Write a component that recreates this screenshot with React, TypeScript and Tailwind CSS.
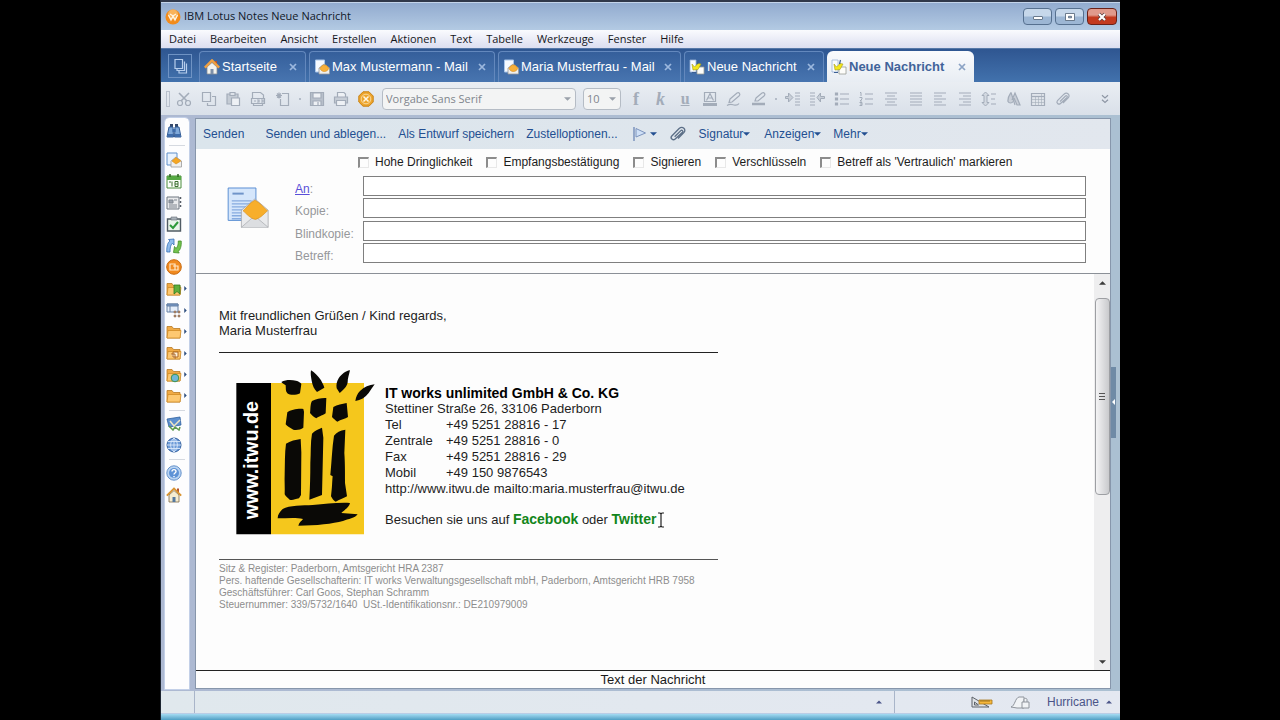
import { useState } from 'react';
import type { FC, ReactNode } from 'react';

type IconProps = { children: ReactNode; className?: string };

// 16x16 outline icon used by the toolbar
const Glyph: FC<IconProps> = ({ children, className = 'w-4 h-4' }) => (
  <svg viewBox="0 0 16 16" className={className} fill="none" stroke="currentColor" strokeWidth="1.2">
    {children}
  </svg>
);

const Caret: FC<{ className?: string; up?: boolean }> = ({ className = 'w-[7px] h-1', up }) => (
  <svg viewBox="0 0 8 4" className={className} fill="currentColor">
    <path d={up ? 'M0 4h8L4 0z' : 'M0 0h8L4 4z'} />
  </svg>
);

const HouseIcon = () => (
  <svg viewBox="0 0 16 16" className="w-4 h-4 shrink-0">
    <path d="M11 2h2v4h-2z" fill="#b5522d" />
    <path d="M3 8v7h10V8L8 3.500z" fill="#f3f3ee" stroke="#8b8f94" strokeWidth=".8" />
    <path d="M6.500 10h3v5h-3z" fill="#7d8fa8" />
    <path d="M.8 8.600 8 1.400l7.200 7.200" fill="none" stroke="#f0a040" strokeWidth="2.400" />
  </svg>
);

const MailIcon = () => (
  <svg viewBox="0 0 16 16" className="w-4 h-4 shrink-0">
    <path d="M1.500 1h9v12h-9z" fill="#f6faff" stroke="#a9c6ea" />
    <path d="m5 9 5-4 5.500 4v6H5z" fill="#efefee" stroke="#9a9a9a" strokeWidth=".8" />
    <path d="M6 9.500C7 7 9 6 10.300 6c1.500 0 3.500 1 4.500 3.500-1 2-2.500 3-4.500 3s-3.300-1-4.300-3z" fill="#f7b03a" stroke="#d68910" strokeWidth=".6" />
  </svg>
);

const ComposeIcon = () => (
  <svg viewBox="0 0 16 16" className="w-4 h-4 shrink-0">
    <path d="M1 1h6v12H1z" fill="#f8fbff" stroke="#9ab3d6" strokeWidth=".8" />
    <path d="M8 8h7v7H8z" fill="#fdfdfa" stroke="#9a9d94" strokeWidth=".8" />
    <path d="m3 5 2.500 3L9 4.500l3 .5-3 5.500-5 .5z" fill="#f4e71c" stroke="#a89e14" strokeWidth=".6" />
    <path d="M9.500 1 8.500 5M3 13.500h4" stroke="#3c5f93" strokeWidth="1.200" />
  </svg>
);

const Clip: FC<{ className?: string }> = ({ className }) => (
  <Glyph className={className}>
    <path d="M5 10.500 10.500 5c1-1 2.500.5 1.500 1.500l-6.500 6c-2 1.800-4.800-.8-3-2.800L9 3.200c3-2.700 6.800.8 4.200 3.600L8 12" />
  </Glyph>
);

const menus = ['Datei', 'Bearbeiten', 'Ansicht', 'Erstellen', 'Aktionen', 'Text', 'Tabelle', 'Werkzeuge', 'Fenster', 'Hilfe'];

const tabs = [
  { label: 'Startseite', icon: <HouseIcon />, width: 'w-[107px]' },
  { label: 'Max Mustermann - Mail', icon: <MailIcon />, width: 'w-[186px]' },
  { label: 'Maria Musterfrau - Mail', icon: <MailIcon />, width: 'w-[183px]' },
  { label: 'Neue Nachricht', icon: <ComposeIcon />, width: 'w-[140px]' },
];

const TitleBar = () => (
  <header className="flex items-center h-7 pl-1 pr-[3px] bg-linear-to-b from-[#92abcf] to-[#b3cae3] border-t border-[#c4d4ea]">
    <svg viewBox="0 0 16 16" className="w-4 h-4">
      <circle cx="8" cy="8" r="7.500" fill="#f28c1c" />
      <circle cx="8" cy="5.500" r="5" fill="#f9b35a" />
      <path d="m3.500 6 2.500 5 2-4 2 4 2.500-5M5 5l3 2 3-2" fill="none" stroke="#fff3df" strokeWidth="1.300" />
    </svg>
    <h1 className="ml-[3px] font-['Open_Sans',sans-serif] text-[11px] text-[#101828]">IBM Lotus Notes Neue Nachricht</h1>
    <div className="ml-auto flex gap-[3px] text-white">
      <button aria-label="Minimieren" className="w-[29px] h-[17px] flex items-center justify-center rounded-sm border border-[#56708f] bg-linear-to-b from-[#c6d7ea] from-45% to-[#9cb6d4] to-55%">
        <svg viewBox="0 0 12 10" className="w-3 h-2.5"><rect x="1.500" y="4.500" width="9" height="3" rx=".5" fill="#fff" stroke="#4f5f74" strokeWidth=".8" /></svg>
      </button>
      <button aria-label="Maximieren" className="w-[29px] h-[17px] flex items-center justify-center rounded-sm border border-[#56708f] bg-linear-to-b from-[#c6d7ea] from-45% to-[#9cb6d4] to-55%">
        <svg viewBox="0 0 12 10" className="w-3 h-2.5"><path d="M1.500 1.500h9v7h-9zM4.500 4.300v1.500h3V4.300z" fill="#fff" fillRule="evenodd" stroke="#4f5f74" strokeWidth=".8" /></svg>
      </button>
      <button aria-label="Schließen" className="w-[30px] h-[17px] flex items-center justify-center rounded-sm border border-[#6b2118] bg-linear-to-b from-[#e09a8c] from-40% to-[#c33a1f] to-55%">
        <svg viewBox="0 0 12 10" className="w-3 h-2.5"><path d="m3 2 6 6M9 2 3 8" stroke="#5a3a3a" strokeWidth="3.600" /><path d="m3 2 6 6M9 2 3 8" stroke="#fff" strokeWidth="2.200" /></svg>
      </button>
    </div>
  </header>
);

const TabBar = () => (
  <div className="flex items-end h-[34px] pl-1 bg-linear-to-b from-[#2f5691] to-[#4272ad] border-t border-[#5778a8] font-['Liberation_Sans',Arial,sans-serif] text-[13px] text-white">
    <button aria-label="Öffnen" className="self-center w-6 h-6 mx-[3px] mr-[7px] flex items-center justify-center border border-[#6f93c4] text-[#b6cdec]">
      <Glyph>
        <path d="M3 1.500h7.500v9H3zM5 10.500v2h7.500v-9M7 12.500V15h7.500V5.500" />
      </Glyph>
    </button>
    {tabs.map((tab, i) => (
      <div key={i} className={`${tab.width} mr-[3px] h-[31px] flex items-center pl-1 pr-2 rounded-t border border-b-0 border-[#6388bd] bg-linear-to-b from-[#355f9b] to-[#4875b0]`}>
        {tab.icon}
        <a href="#" className="ml-0.5 whitespace-nowrap">{tab.label}</a>
        <button aria-label="Tab schließen" className="ml-auto text-[#9cb8de]">
          <Glyph className="w-2 h-2"><path d="m2 2 12 12M14 2 2 14" strokeWidth="3.500" /></Glyph>
        </button>
      </div>
    ))}
    <div className="w-[147px] h-[31px] flex items-center pl-1 pr-2 rounded-t-md bg-linear-to-b from-[#fafbfd] to-[#e8edf3]">
      <ComposeIcon />
      <a href="#" className="ml-0.5 font-bold text-[#41639a] whitespace-nowrap">Neue Nachricht</a>
      <button aria-label="Tab schließen" className="ml-auto text-[#8ba2c4]">
        <Glyph className="w-2 h-2"><path d="m2 2 12 12M14 2 2 14" strokeWidth="3.500" /></Glyph>
      </button>
    </div>
  </div>
);

const Tool: FC<{ label: string; children: ReactNode }> = ({ label, children }) => (
  <button aria-label={label} className="w-5 h-5 flex items-center justify-center text-[#a3acb9]">
    {children}
  </button>
);

const Dot = () => <span className="w-[5px] flex justify-center"><span className="w-0.5 h-0.5 bg-[#b4bcc8]" /></span>;

const lines = (rows: number[][]) => rows.map(([y, x1, x2]) => `M${x1} ${y}H${x2}`).join('');

const Toolbar = () => (
  <div className="flex items-center h-[33px] bg-linear-to-b from-[#eaeef3] to-[#d9e0e9]">
    <span className="ml-[5px] w-1 h-4 border border-[#b9c1cd]" />
    <div className="ml-1 w-[202px] flex items-center justify-between">
      <Tool label="Ausschneiden">
        <Glyph><circle cx="4" cy="12" r="2.500" /><circle cx="12" cy="12" r="2.500" /><path d="m5 10 8-8M11 10 3 2" strokeWidth="1.600" /></Glyph>
      </Tool>
      <Tool label="Kopieren"><Glyph><path d="M1.500 1.500h8v9h-8zM11 5.500h3.500v9h-8V12" /></Glyph></Tool>
      <Tool label="Einfügen"><Glyph><path d="M2 3h11v10H2z" fill="#c5ccd5" /><path d="M5 1.500h5v3H5z" fill="#dde2e9" /><path d="M6.500 7h8v7.500h-8z" fill="#eef1f5" /></Glyph></Tool>
      <Tool label="Spezial einfügen"><Glyph><path d="M2.500 7V1.500h8L13.500 4v3M1.500 7.500h13v5h-13zM3.500 13v1.500h9V13M4 10h2m1-1h2v2H7m4-2h2v2h-2" /></Glyph></Tool>
      <Tool label="Neues Dokument"><Glyph><path d="M7 2.500h6.500v12h-8V8M1 4.500h6M4 1.500v6M2 2.500l4 4M6 2.500l-4 4" /></Glyph></Tool>
      <Dot />
      <Tool label="Speichern"><Glyph><path d="M1.500 1.500h13v13h-13z" fill="#b9c1cc" /><path d="M4 2h8v5H4zM4 10h8v4.500H4z" fill="#eef1f5" /><path d="M9 11v3" /></Glyph></Tool>
      <Tool label="Drucken"><Glyph><path d="M4.500 6V1.500H11L12.500 3v3" fill="#eef1f5" /><path d="M1.500 6h13v6h-13z" fill="#c6cdd6" /><path d="M3.500 9.500h9v5h-9z" fill="#eef1f5" /></Glyph></Tool>
      <Tool label="Abbrechen">
        <svg viewBox="0 0 16 16" className="w-4 h-4">
          <path d="M5 .8h6L15.200 5v6L11 15.200H5L.8 11V5z" fill="#eda52d" stroke="#c98215" />
          <circle cx="8" cy="8" r="4.800" fill="none" stroke="#fbe3b4" strokeWidth=".8" />
          <path d="m5.500 5.500 5 5m0-5-5 5" stroke="#fff6e2" strokeWidth="1.500" />
        </svg>
      </Tool>
    </div>
    <div className="relative ml-[6px] w-[194px] text-[#9aa1aa]">
      <select aria-label="Schriftart" className="block w-full h-[22px] pt-px pl-[3px] appearance-none rounded-sm border border-[#b5bcc5] bg-[#f3f4f4] font-['Open_Sans',sans-serif] text-[11px] text-[#7f858d]">
        <option>Vorgabe Sans Serif</option>
      </select>
      <Caret className="absolute right-[5px] top-[9px] w-[7px] h-1 pointer-events-none" />
    </div>
    <div className="relative ml-[7px] w-[38px] text-[#9aa1aa]">
      <select aria-label="Schriftgröße" className="block w-full h-[22px] pt-px pl-[3px] appearance-none rounded-sm border border-[#b5bcc5] bg-[#f3f4f4] font-['Open_Sans',sans-serif] text-[11px] text-[#7f858d]">
        <option>10</option>
      </select>
      <Caret className="absolute right-[5px] top-[9px] w-[7px] h-1 pointer-events-none" />
    </div>
    <div className="ml-[5px] flex-1 flex items-center justify-between">
      <Tool label="Fett"><span className="font-['Liberation_Serif',serif] font-bold text-lg leading-none">f</span></Tool>
      <Tool label="Kursiv"><span className="font-['Liberation_Serif',serif] font-bold italic text-lg leading-none">k</span></Tool>
      <Tool label="Unterstrichen"><span className="font-['Liberation_Serif',serif] text-base leading-none font-bold underline">u</span></Tool>
      <Tool label="Schriftfarbe"><Glyph><path d="M2.500 1.500h11v9h-11z" /><path d="m4.500 9.500 3.500-7 3.500 7M6 7h4" /><path d="M1 13.500h14" strokeWidth="3" /></Glyph></Tool>
      <Tool label="Hervorheben"><Glyph><path d="m4 8 7-6c2-1 4 1 2 3l-7 6-3 .5zM1 14.500c3-2 5-1 7-.5s4 0 5-1.500" /></Glyph></Tool>
      <Tool label="Textmarker"><Glyph><path d="m5 7 6-5c2-1 4 1 2 3L7 10H4z" /><path d="M1 13h13" strokeWidth="2.500" /></Glyph></Tool>
      <Dot />
      <Tool label="Einrücken"><Glyph><path d={lines([[2, 10, 15], [5, 10, 15], [8, 10, 15], [11, 10, 15], [14, 10, 15]])} /><path d="M.5 5.500h3V2l4.500 4.500L3.500 11V7.500h-3z" fill="#c9cfd8" strokeWidth="1" /></Glyph></Tool>
      <Tool label="Ausrücken"><Glyph><path d={lines([[2, 1, 6], [5, 1, 6], [8, 1, 6], [11, 1, 6], [14, 1, 6]])} /><path d="M8 6.500 11.500 2v3.500h4v2h-4V11z" fill="#c9cfd8" strokeWidth="1" /></Glyph></Tool>
      <Tool label="Aufzählung"><Glyph><path d={lines([[3, 6, 15], [8, 6, 15], [13, 6, 15]])} /><path d="M1.500 2h2v2h-2zm0 5h2v2h-2zm0 5h2v2h-2z" fill="currentColor" /></Glyph></Tool>
      <Tool label="Nummerierung"><Glyph><path d={lines([[3, 7, 15], [8, 7, 15], [13, 7, 15]])} /><path d="M2 1.500h1V5M1.500 6.500H4v1.500L2 10h2M1.500 11.500H4v3H1.500M2 13h2" strokeWidth="1" /></Glyph></Tool>
      <Tool label="Zentriert"><Glyph><path d={lines([[2, 2, 14], [5, 4, 12], [8, 2, 14], [11, 4, 12], [14, 2, 14]])} /></Glyph></Tool>
      <Tool label="Blocksatz"><Glyph><path d={lines([[2, 2, 14], [5, 2, 14], [8, 2, 14], [11, 2, 14], [14, 2, 14]])} /></Glyph></Tool>
      <Tool label="Linksbündig"><Glyph><path d={lines([[2, 2, 14], [5, 2, 10], [8, 2, 14], [11, 2, 10], [14, 2, 14]])} /></Glyph></Tool>
      <Tool label="Rechtsbündig"><Glyph><path d={lines([[2, 2, 14], [5, 6, 14], [8, 2, 14], [11, 6, 14], [14, 2, 14]])} /></Glyph></Tool>
      <Tool label="Zeilenabstand"><Glyph><path d={lines([[3, 10, 15], [8, 10, 14], [13, 10, 15]])} /><path d="M4.500 1 8 4.500H6v7h2L4.500 15 1 11.500h2v-7H1z" fill="#d3d9e1" strokeWidth="1" /></Glyph></Tool>
      <Tool label="Texteigenschaften"><Glyph><path d="M5 1.500c-2 3-3.500 5-3 9 1 2 4 2 5 0M5 1.500 9 14M6 9l3-7 5 12h-3l-3-7" fill="#c9cfd8" /></Glyph></Tool>
      <Tool label="Tabelle"><Glyph><path d="M1.500 2.500h13v12h-13z" fill="#e0e5eb" /><path d="M2 5.500h12" strokeWidth="1.200" /><path d="M2 8.500h12M2 11.500h12M5.500 5v9M8.500 5v9M11.500 3v11" strokeWidth=".6" /></Glyph></Tool>
      <Tool label="Anhang"><Clip className="w-4 h-4" /></Tool>
    </div>
    <button aria-label="Mehr Symbole" className="ml-[26px] mr-[9px] text-[#8d96a4]">
      <Glyph className="w-3 h-3"><path d="m4 3 4 3.500L12 3M4 9l4 3.500L12 9" strokeWidth="1.600" /></Glyph>
    </button>
  </div>
);

const SideButton: FC<{ label: string; arrow?: boolean; children: ReactNode }> = ({ label, arrow, children }) => (
  <button aria-label={label} className="w-full h-5 flex items-center gap-[2px] pl-px text-[#2f4f7f]">
    <svg viewBox="0 0 16 16" className="w-4 h-4 shrink-0">{children}</svg>
    {arrow && (
      <svg viewBox="0 0 3 6" className="w-[3px] h-[5px] shrink-0" fill="currentColor"><path d="M0 0v6l3-3z" /></svg>
    )}
  </button>
);

const Folder: FC<{ children?: ReactNode }> = ({ children }) => (
  <>
    <path d="M1 14V2.500h5l1.500 2H14V14z" fill="#f0aa45" stroke="#b87a24" strokeWidth=".8" />
    <path d="M1 14 2 6.500h13L14 14z" fill="#fdc871" stroke="#cf8a24" strokeWidth=".8" />
    {children}
  </>
);

const Sidebar = () => (
  <nav className="w-6 shrink-0 flex flex-col bg-[#fdfdfe] rounded-t-sm outline outline-[#c3d0e8] pt-[3px]">
    <SideButton label="Suchen">
      <path d="M4 1h3v3H4zM9 1h3v3H9z" fill="#33486b" />
      <path d="M1 14 3 4h4l.5 10zM15 14 13 4H9l-.5 10z" fill="#7fa9da" stroke="#335c96" />
      <path d="M2 11h5v3H1.500zM9 11h5l.5 3H9zM6.500 6h3v3h-3z" fill="#3e6cab" />
    </SideButton>
    <hr className="mt-1 mb-1 mx-1 border-[#d5d9e0]" />
    <div className="flex flex-col justify-between h-[256px]">
      <SideButton label="Mail">
        <path d="M1 1h10v12H1z" fill="#eaf3fe" stroke="#5f8fca" />
        <path d="m5 9 5-4 5.500 4v6H5z" fill="#efefee" stroke="#9a9a9a" strokeWidth=".8" />
        <path d="m6 9 4-3.500L14.800 9 10 12z" fill="#f5a623" stroke="#d68910" strokeWidth=".6" />
      </SideButton>
      <SideButton label="Kalender">
        <path d="M1 3h14v12H1z" fill="#fbfffa" stroke="#4b8c3c" />
        <path d="M1 3h14v4H1z" fill="#57a944" />
        <path d="M4 1v3M12 1v3" stroke="#2f6322" strokeWidth="1.500" />
        <path d="M3 9h2M6 8.500v5M9 8.500h3v5H9zM9 11h3" fill="none" stroke="#3b6e30" />
      </SideButton>
      <SideButton label="Kontakte">
        <path d="M1 2h12v12H1z" fill="#e9eaec" stroke="#6f7680" />
        <path d="M3 5h4v3H3zM3 10h8M3 12h8M8 5h3" fill="#9ba2ac" stroke="#7e858f" />
        <path d="M14.500 2v2m0 2v2m0 2v2" stroke="#555c66" strokeWidth="1.500" />
      </SideButton>
      <SideButton label="Aufgaben">
        <path d="M1.500 3h13v12h-13z" fill="#e9f4ea" stroke="#505b64" strokeWidth="1.400" />
        <path d="M5 1h6v3H5z" fill="#a8b1b9" stroke="#68717a" strokeWidth=".6" />
        <path d="m4 9 3 3 5-6" fill="none" stroke="#2e9a3a" strokeWidth="2" />
      </SideButton>
      <SideButton label="Replikation">
        <path d="M.8 14C.5 8 2 4 4 3L2.500 1.500 8 1v6L6.300 5.300C4.500 7 4 10 4 14z" fill="#8fbcec" stroke="#356fb5" strokeWidth=".8" />
        <path d="M15.200 3c.5 5-1 9-3 10.500l1 1.500-5.700-.5 1-6 1.500 2C12 8.500 12.300 6 12.300 3z" fill="#74c44e" stroke="#3f8b27" strokeWidth=".8" />
      </SideButton>
      <SideButton label="Sametime">
        <circle cx="8" cy="8" r="7.300" fill="#f18a1f" stroke="#c86a10" />
        <path d="M4 5h5v6H4zM7 7h5v4H8" fill="none" stroke="#ffe8c7" strokeWidth="1.200" />
      </SideButton>
      <SideButton label="Lesezeichen" arrow><Folder><path d="M8 4h6v9l-3-2.500L8 13z" fill="#5fae3c" stroke="#327a1c" strokeWidth=".8" /></Folder></SideButton>
      <SideButton label="Datenbanken" arrow>
        <path d="M1 2h11v8H1z" fill="#e5eefa" stroke="#6680a4" />
        <path d="M1 2h11v2H1zM4 4v6" fill="#7598c8" stroke="#6680a4" />
        <path d="M8 9h2v2H8zm4 0h2v2h-2zm-4 4h2v2H8zm4 0h2v2h-2z" fill="#b28b6f" stroke="#8b6a52" strokeWidth=".5" />
      </SideButton>
      <SideButton label="Ordner" arrow><Folder /></SideButton>
      <SideButton label="Verlauf" arrow><Folder><path d="M7 7h5v5H7zM5 9h4v5" fill="#fff1d8" stroke="#a55c18" strokeWidth=".9" /></Folder></SideButton>
      <SideButton label="Internet" arrow><Folder><circle cx="9" cy="11" r="3.800" fill="#6fb7d8" stroke="#3b9150" /></Folder></SideButton>
      <SideButton label="Weitere" arrow><Folder /></SideButton>
    </div>
    <hr className="mt-1 mb-0.5 mx-1 border-[#d5d9e0]" />
    <SideButton label="Designer">
      <path d="m1 4 13-2 1 8-12 2z" fill="#5d90cf" stroke="#2f5f9e" strokeWidth=".8" />
      <path d="m3 11 4 4 2-3 4 3 1-3" fill="none" stroke="#5d9a4c" strokeWidth="1.500" />
      <path d="m4 6 4 5 6-6" fill="none" stroke="#efe6c4" strokeWidth="1.500" />
    </SideButton>
    <span className="h-0.5" />
    <SideButton label="Browser">
      <circle cx="8" cy="8" r="7" fill="#6d9bd8" stroke="#315f9f" />
      <path d="M1 8h14M2 4.500h12M2 11.500h12M8 1v14M8 1C3.500 5 3.500 11 8 15M8 1c4.500 4 4.500 10 0 14" fill="none" stroke="#dbe9fa" strokeWidth=".9" />
    </SideButton>
    <hr className="mt-1 mb-[3px] mx-1 border-[#d5d9e0]" />
    <SideButton label="Hilfe">
      <circle cx="8" cy="8" r="7.200" fill="#b9d4f3" stroke="#6793cb" />
      <circle cx="8" cy="8" r="5" fill="#5f93d6" />
      <path d="M6 6.500c0-2.500 4-2.500 4 0 0 1.500-2 1.500-2 3M8 11v1.300" fill="none" stroke="#fff" strokeWidth="1.400" />
    </SideButton>
    <span className="h-0.5" />
    <SideButton label="Startseite">
      <path d="M11 1.500h2V6h-2z" fill="#b5522d" />
      <path d="M3 8v7h10V8L8 3.500z" fill="#f5ecd0" stroke="#7b6848" strokeWidth=".8" />
      <path d="M6.500 10h3v5h-3z" fill="#54789f" />
      <path d="M.8 8.600 8 1.400l7.200 7.200" fill="none" stroke="#d9932f" strokeWidth="1.800" />
    </SideButton>
  </nav>
);

const ActionBar = () => (
  <div className="flex items-center h-[30px] pb-px pl-[7px] bg-linear-to-r from-[#dbe5ec] to-[#e2e7ee] text-[#234f91] whitespace-nowrap">
    <button className="mr-[21px]">Senden</button>
    <button className="mr-3">Senden und ablegen...</button>
    <button className="mr-3">Als Entwurf speichern</button>
    <button className="mr-[14px]">Zustelloptionen...</button>
    <button aria-label="Kennzeichnen" className="mr-3 flex items-center gap-0.5">
      <svg viewBox="0 0 16 16" className="w-4 h-4" fill="#cfe0f6" stroke="#7b93bd"><path d="M2 1v14" strokeWidth="1.500" /><path d="m4 2.500 9.500 4.500L4 11z" /></svg>
      <Caret />
    </button>
    <button aria-label="Anhang" className="mr-3 text-[#5c6f87]"><Clip className="w-[18px] h-[18px]" /></button>
    <button className="mr-[14px] flex items-center">Signatur<Caret /></button>
    <button className="mr-3 flex items-center">Anzeigen<Caret /></button>
    <button className="flex items-center">Mehr<Caret /></button>
  </div>
);

const options = ['Hohe Dringlichkeit', 'Empfangsbestätigung', 'Signieren', 'Verschlüsseln', "Betreff als 'Vertraulich' markieren"];
const fields = ['An', 'Kopie', 'Blindkopie', 'Betreff'];

const MailHeader = () => {
  const [checked, setChecked] = useState<string[]>([]);

  const toggle = (name: string) => {
    setChecked(checked.includes(name) ? checked.filter((c) => c !== name) : [...checked, name]);
  };

  return (
    <div className="h-[125px] pt-[5px] bg-[#fdfdfd] border-b border-[#8b9097]">
      <div className="flex gap-[14px] pl-[162px] h-4 whitespace-nowrap">
        {options.map((name) => (
          <label key={name} className="flex items-center gap-[6px] text-[#1c1c1c]">
            <input
              type="checkbox"
              checked={checked.includes(name)}
              onChange={() => toggle(name)}
              className="appearance-none w-[11px] h-[11px] border-t-2 border-l-2 border-r border-b border-t-[#8c8c8c] border-l-[#8c8c8c] border-r-[#e8e8e8] border-b-[#e8e8e8] checked:bg-[#555]"
            />
            {name}
          </label>
        ))}
      </div>
      <div className="flex mt-[6px] pl-[31px] pr-6">
        <svg viewBox="0 0 126 124" className="w-[42px] h-[41px] mt-[11px] mr-[26px] shrink-0">
          <path d="M3 3h84v98H3z" fill="#d5e6fb" stroke="#5b8fd3" strokeWidth="3" />
          <path d="M16 20h34" stroke="#6f94c9" strokeWidth="6" />
          <path d="M14 42h60M14 51h60M14 60h45M14 69h42M14 78h30M14 87h30M14 96h28" stroke="#86abe0" strokeWidth="4" />
          <path d="M43 70 84 36l40 34v52H43z" fill="#e9eaec" stroke="#94979c" strokeWidth="2" />
          <path d="m43 122 32-28h16l33 28" fill="#dcdee1" stroke="#a4a7ab" strokeWidth="2" />
          <path d="M48 72c10-8 22-26 36-32 14 6 26 22 38 32-10 8-20 22-36 26-16-2-28-18-38-26z" fill="#f7ae2b" stroke="#d98f16" strokeWidth="2" />
        </svg>
        <div className="flex-1 flex flex-col justify-between h-[87px]">
          {fields.map((name, i) => (
            <div key={name} className="flex items-end h-5">
              <label htmlFor={name} className="w-[68px] leading-[14px] text-[#96989b]">
                {i === 0 ? <a href="#" className="text-[#5a4fd8] underline">An</a> : name}:
              </label>
              <input id={name} type="text" className="flex-1 h-5 px-1 bg-white border border-[#7f7f7f] outline-none" />
            </div>
          ))}
        </div>
      </div>
    </div>
  );
};

const CompanyLogo = () => (
  <svg viewBox="54 222 444 501" className="w-[148px] h-[167px] shrink-0">
    <path d="M183 264h279v454H183z" fill="#f5c71c" />
    <path d="M79 264h104v454H79z" fill="#000" />
    <text x="144" y="673" transform="rotate(-90 144 673)" fill="#fff" fontFamily="'Liberation Sans', Arial, sans-serif" fontWeight="bold" fontSize="59">
      www.itwu.de
    </text>
    <g fill="#0a0906">
      <path d="M214 261c14-8 32-6 44-4 8 2 14 6 16 10l-4 28c-12 6-30 6-38 0-6-6-4-14-5-24-4-4-10-6-13-10z" />
      <path d="M303 226c10 6 22 18 30 30 4 8 8 14 10 22l-22 13c-8-8-14-20-16-34-2-12-4-20-2-31z" />
      <path d="M420 226c-14 2-26 12-34 24-6 10-8 20-6 30l9 14c10-8 22-18 24-32 0-12 4-22 7-36z" />
      <path d="M494 268c-16 2-32 8-44 20-8 8-12 18-14 30 16-2 30-10 40-24 6-8 12-18 18-26z" />
      <path d="M232 352c10-8 34-12 48-10l2 8-2 48c-8 6-20 8-30 6-10-6-18-10-23-16z" />
      <path d="M306 318c12-6 30-10 43-9l-2 46c-12 8-24 10-28 15-8-4-14-10-19-16 2-10 0-26 6-36z" />
      <path d="M370 336c12-8 26-8 40-12l4 42c-8 6-22 8-32 14-6-4-10-8-16-14z" />
      <path d="M228 446c12-8 30-12 44-14l2 40-1 128-6 10c-12 2-20 8-28 4-6-6-12-10-15-16 1-20-1-40 0-60 1-30 0-64 4-92z" />
      <path d="M306 416c8-10 18-12 30-18l4 30-4 172-38 14c2-40 3-70 3-110 2-30 0-60 5-88z" />
      <path d="M372 422c8-10 18-16 34-18l-3 70c2 30 2 50 2 90l6 40c-10 6-20 8-34 16-8-4-10-10-14-16 4-30 3-40 5-60l-7-4c4-40 5-80 11-118z" />
      <path d="M218 642c20-12 60-10 90-12 40-2 70-8 112-6-2 12-18 22-26 30l49 4c-8 12-28 14-44 20-30 8-80 14-134 14 2-10 10-14 14-20-22-6-50-2-76-2 0-12 7-20 15-28z" />
    </g>
  </svg>
);

const contacts = [
  ['Tel', '+49 5251 28816 - 17'],
  ['Zentrale', '+49 5251 28816 - 0'],
  ['Fax', '+49 5251 28816 - 29'],
  ['Mobil', '+49 150 9876543'],
];

const MessageBody = () => (
  <div className="flex-1 pl-[23px] pt-[34px] text-[13px] text-[#1e1e1e] leading-[15px] whitespace-nowrap">
    <p>Mit freundlichen Grüßen / Kind regards,</p>
    <p>Maria Musterfrau</p>
    <hr className="w-[499px] mt-[14px] border-[#222]" />
    <div className="flex pl-[9px] pt-4 h-[206px]">
      <CompanyLogo />
      <div className="ml-[9px] pt-4 leading-4">
        <p className="font-bold text-black text-[14px] leading-4">IT works unlimited GmbH &amp; Co. KG</p>
        <p>Stettiner Straße 26, 33106 Paderborn</p>
        <table>
          <tbody>
            {contacts.map(([kind, number]) => (
              <tr key={kind}>
                <td className="w-[61px] p-0">{kind}</td>
                <td className="p-0">{number}</td>
              </tr>
            ))}
          </tbody>
        </table>
        <p className="flex gap-1"><span>http://www.itwu.de</span><span>mailto:maria.musterfrau@itwu.de</span></p>
        <p className="relative mt-[14px]">
          Besuchen sie uns auf <a href="#" className="font-bold text-[14px] leading-4 text-[#12851a]">Facebook</a> oder{' '}
          <a href="#" className="font-bold text-[14px] leading-4 text-[#12851a]">Twitter</a>
          <svg viewBox="0 0 8 16" className="absolute left-[272px] top-[1px] w-2 h-4" fill="none" stroke="#222" strokeWidth="1.200">
            <path d="M1 1h2l1 1 1-1h2M4 2v12M1 15h2l1-1 1 1h2" />
          </svg>
        </p>
      </div>
    </div>
    <hr className="w-[499px] border-[#555]" />
    <div className="pt-[3px] text-[10px] leading-[12px] text-[#8d8d8d]">
      <p>Sitz &amp; Register: Paderborn, Amtsgericht HRA 2387</p>
      <p>Pers. haftende Gesellschafterin: IT works Verwaltungsgesellschaft mbH, Paderborn, Amtsgericht HRB 7958</p>
      <p>Geschäftsführer: Carl Goos, Stephan Schramm</p>
      <p>Steuernummer: 339/5732/1640&nbsp; USt.-Identifikationsnr.: DE210979009</p>
    </div>
  </div>
);

const ScrollBar = () => (
  <div className="w-4 shrink-0 flex flex-col items-center bg-[#eeeeef] text-[#3c3c3c]">
    <button aria-label="Nach oben" className="h-6 pb-[6px] flex items-center justify-center"><Caret up className="w-[7px] h-1" /></button>
    <div className="w-[15px] h-[197px] flex flex-col items-center justify-center gap-0.5 rounded-sm border border-[#9d9fa3] bg-linear-to-r from-[#f4f4f5] to-[#c9cacd]">
      <span className="w-1.5 h-px bg-[#555]" />
      <span className="w-1.5 h-px bg-[#555]" />
      <span className="w-1.5 h-px bg-[#555]" />
    </div>
    <button aria-label="Nach unten" className="mt-auto h-4 flex items-center justify-center"><Caret className="w-[7px] h-1" /></button>
  </div>
);

const StatusBar = () => (
  <footer className="flex items-stretch h-[22px] bg-linear-to-r from-[#e0e8ed] to-[#e4e8f1] text-[12px] text-[#4a5488]">
    <div className="w-[34px] border-r border-[#a9b5c9]" />
    <div className="flex-1 flex items-center justify-end pr-3 border-r border-[#a9b5c9]"><Caret up className="w-1.5 h-1" /></div>
    <div className="w-[225px] flex items-center justify-end pr-2">
      <svg viewBox="0 0 22 12" className="w-[22px] h-3 mr-[17px]" fill="none">
        <path d="M1 1v10h17zM3.500 6v3h4z" fill="#dfe2e6" stroke="#5c6168" />
        <path d="M8 4h13v4H8z" fill="#f6b73c" stroke="#a6761c" strokeWidth=".8" />
        <path d="M10 4v2M12 4v2M14 4v2M16 4v2M18 4v2" stroke="#7d5713" strokeWidth=".7" />
      </svg>
      <svg viewBox="0 0 20 14" className="w-5 h-3.5 mr-[17px]" fill="#f1f3f6" stroke="#8f949c">
        <path d="M1 12c4-1 4-9 8-10h5v11H7z" />
        <path d="M12 7h7v6h-7zM14 7V4.500c0-1.500 3-1.500 3 0V7" />
      </svg>
      <button className="flex items-center gap-[7px]">Hurricane<Caret up className="w-1.5 h-1" /></button>
    </div>
  </footer>
);

export default function App() {
  return (
    <div className="min-h-screen flex justify-center bg-black font-['Liberation_Sans',Arial,sans-serif] text-xs">
      <div className="w-3/4 flex flex-col border-l border-[#1c2430] bg-[#aebcd2] border-t-2 border-t-[#30384a]">
        <TitleBar />
        <nav className="flex items-center gap-[14px] h-[18px] pl-2 bg-linear-to-b from-[#fafbfe] to-[#dcdef0] font-['Open_Sans',sans-serif] text-[11px] text-[#15161c]">
          {menus.map((item) => (
            <button key={item}>{item}</button>
          ))}
        </nav>
        <TabBar />
        <Toolbar />
        <div className="flex-1 flex pt-[3px] pl-1 pb-[2px] bg-linear-to-r from-[#adb9d2] to-[#abc0d2]">
          <Sidebar />
          <main className="ml-[6px] flex-1 flex flex-col min-w-0 border border-[#8796ab] bg-[#fdfdfd]">
            <ActionBar />
            <MailHeader />
            <div className="flex-1 flex">
              <MessageBody />
              <ScrollBar />
            </div>
            <p className="h-[18px] leading-[18px] border-t border-[#222] text-center text-[13px] text-[#1a1a1a]">Text der Nachricht</p>
          </main>
          <div className="w-[9px] shrink-0 flex flex-col items-start justify-center pb-[3px]">
            <button aria-label="Seitenleiste öffnen" className="w-[5px] h-[71px] flex items-center justify-center bg-[#6f8aa6] text-white">
              <svg viewBox="0 0 3 6" className="w-[3px] h-1.5" fill="currentColor"><path d="M3 0v6L0 3z" /></svg>
            </button>
          </div>
        </div>
        <StatusBar />
        <div className="h-[7px] border-t border-[#b9cde6] bg-linear-to-b from-[#a4dbf2] to-[#4f9fc4]" />
      </div>
    </div>
  );
}
